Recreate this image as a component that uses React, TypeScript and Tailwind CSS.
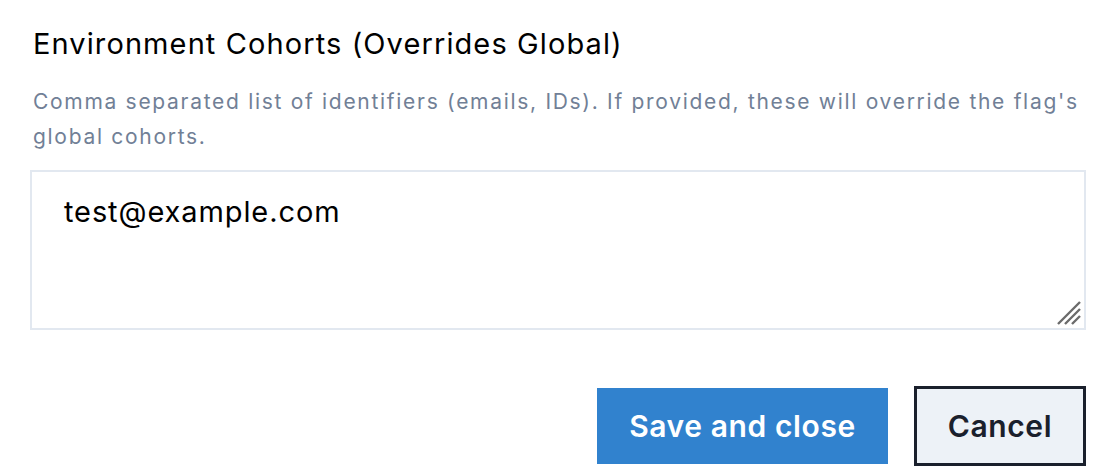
import React from "react";

export default function App() {
  return (
    <div className="w-[1120px] h-[476px] bg-white overflow-hidden" style={{ fontFamily: "Inter, 'Noto Sans', sans-serif" }}>
      <div className="pl-[30px] pr-[34px] pt-[26px]">
        <div className="pl-[3px] text-[29px] leading-[36px] tracking-[1.1px] text-black font-normal">Environment Cohorts (Overrides Global)</div>
        <p className="pl-[3px] mt-[22px] text-[21px] leading-[35px] tracking-[1.7px] text-[#718096]">
          Comma separated list of identifiers (emails, IDs). If provided, these will override the flag's global cohorts.
        </p>
        <div className="mt-[16px] h-[160px] border-2 border-[#e2e8f0] relative pl-[32px] pt-[22px]">
          <div className="text-[29px] leading-[36px] tracking-[0.9px] text-black">test@example.com</div>
          <svg className="absolute right-[2px] bottom-[2px]" width="26" height="26" viewBox="0 0 26 26">
            <path d="M2 24 L24 2 M9 24 L24 9 M16 24 L24 16" stroke="#6b6b6b" strokeWidth="2.4" />
          </svg>
        </div>
        <div className="flex justify-end items-center gap-[26px] mt-[56px]">
          <button className="w-[291px] h-[76px] bg-[#3182ce] text-white text-[30px] tracking-[0.6px] font-semibold">Save and close</button>
          <button className="w-[172px] h-[80px] bg-[#edf2f7] border-[3px] border-[#1a202c] text-[#1a202c] text-[30px] tracking-[0.6px] font-semibold">Cancel</button>
        </div>
      </div>
    </div>
  );
}
